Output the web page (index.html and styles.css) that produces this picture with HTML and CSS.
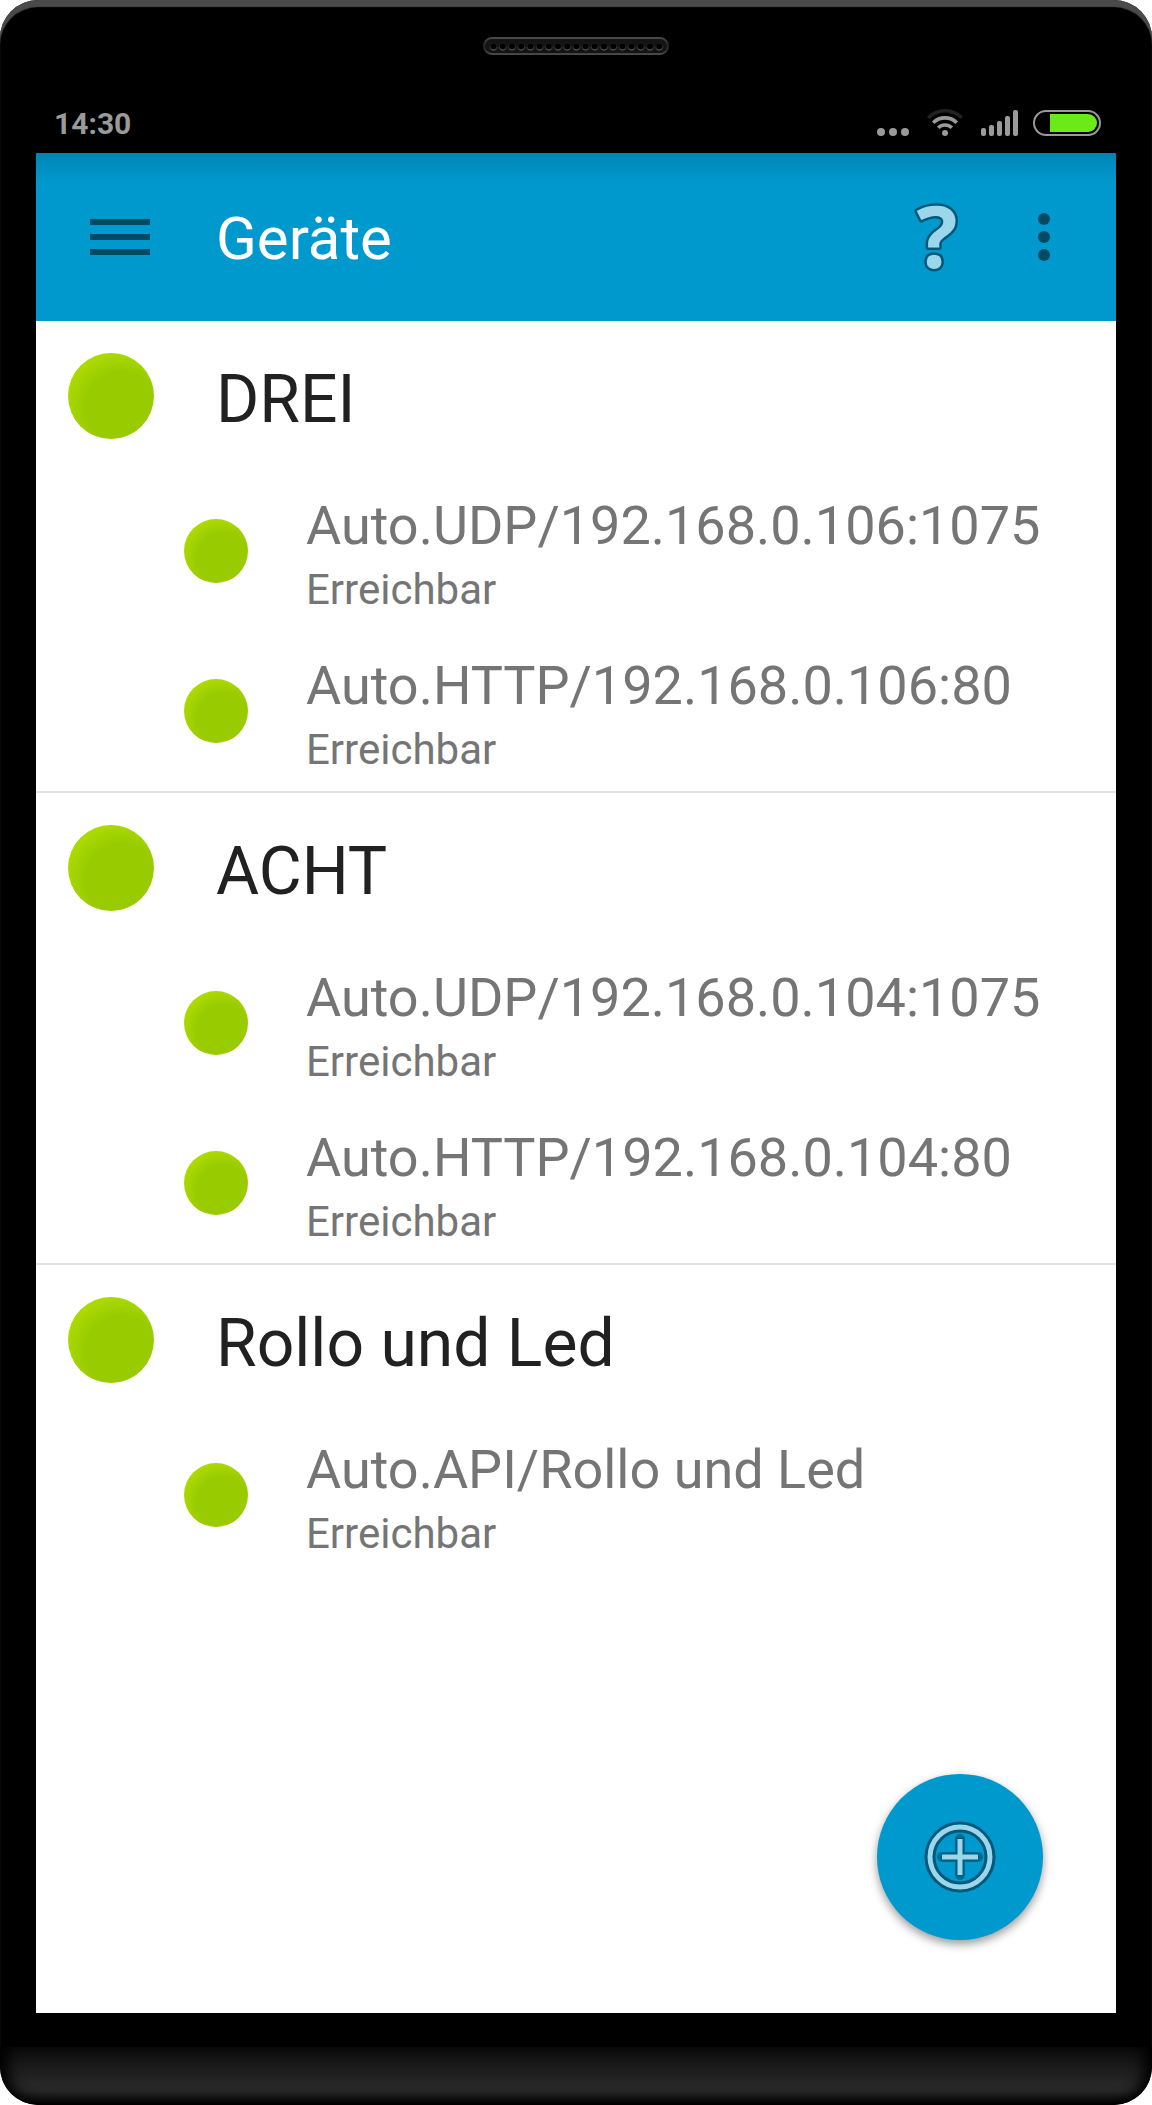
FILE: index.html
```html
<!DOCTYPE html>
<html lang="de">
<head>
<meta charset="utf-8">
<meta name="viewport" content="width=device-width, initial-scale=1">
<title>Geräte</title>
<link rel="stylesheet" href="styles.css">
</head>
<body>
<div class="device">
  <div class="top-bezel">
    <svg class="speaker" width="186" height="18" viewBox="0 0 186 18" aria-hidden="true">
      <defs>
        <linearGradient id="rim" x1="0" y1="0" x2="0" y2="1">
          <stop offset="0" stop-color="#4a4a4a"/>
          <stop offset="0.5" stop-color="#202020"/>
          <stop offset="1" stop-color="#484848"/>
        </linearGradient>
        <linearGradient id="hole" x1="0" y1="0" x2="0" y2="1">
          <stop offset="0.4" stop-color="#1c1c1c"/>
          <stop offset="1" stop-color="#6a6a6a"/>
        </linearGradient>
        <pattern id="holes" x="6" y="0" width="9.2" height="18" patternUnits="userSpaceOnUse">
          <circle cx="4.6" cy="9.5" r="3.5" fill="#000" stroke="url(#hole)" stroke-width="1"/>
        </pattern>
      </defs>
      <rect x="1" y="1" width="184" height="16" rx="8" fill="#141414" stroke="url(#rim)" stroke-width="2"/>
      <rect x="6" y="3" width="174.8" height="12" fill="url(#holes)"/>
    </svg>
  </div>

  <div class="status-bar">
    <time class="clock" datetime="14:30">14:30</time>
    <svg class="status-icons" width="226" height="30" viewBox="0 0 226 30" aria-hidden="true">
      <g fill="#9a9a9a">
        <circle cx="6" cy="24" r="4"/>
        <circle cx="18" cy="24" r="4"/>
        <circle cx="30" cy="24" r="4"/>
        <circle cx="70" cy="25" r="3"/>
        <rect x="106" y="20" width="5" height="8" rx="2"/>
        <rect x="114" y="17" width="5" height="11" rx="2"/>
        <rect x="122" y="13" width="5" height="15" rx="2"/>
        <rect x="130" y="8" width="5" height="20" rx="2"/>
        <rect x="138" y="2" width="5" height="26" rx="2"/>
      </g>
      <g fill="none" stroke-width="3.6">
        <path d="M53.2 9.8a23.5 23.5 0 0 1 33.6 0" stroke="#222"/>
        <path d="M58.2 14.8a16.6 16.6 0 0 1 23.6 0" stroke="#9a9a9a"/>
        <path d="M63.2 19.8a9.6 9.6 0 0 1 13.6 0" stroke="#9a9a9a"/>
      </g>
      <rect x="159" y="3" width="66" height="24" rx="12" fill="none" stroke="#9a9a9a" stroke-width="2"/>
      <path d="M175 6h38a9 9 0 0 1 0 18h-38z" fill="#6cea17"/>
    </svg>
  </div>

  <main class="screen">
    <header class="app-bar">
      <button class="icon-button menu-button" type="button" aria-label="Menü">
        <svg width="60" height="36" viewBox="0 0 60 36" fill="#004a63" aria-hidden="true">
          <rect width="60" height="6"/>
          <rect y="15" width="60" height="6"/>
          <rect y="30" width="60" height="6"/>
        </svg>
      </button>
      <h1 class="title">Geräte</h1>
      <button class="icon-button help-button" type="button" aria-label="Hilfe">
        <svg width="72" height="132" viewBox="0 0 72 132" aria-hidden="true">
          <text class="help-mark" x="37" y="97" text-anchor="middle">?</text>
        </svg>
      </button>
      <button class="icon-button" type="button" aria-label="Weitere Optionen">
        <svg width="72" height="72" viewBox="0 0 72 72" fill="#004a63" aria-hidden="true">
          <circle cx="36" cy="18" r="6"/>
          <circle cx="36" cy="36" r="6"/>
          <circle cx="36" cy="54" r="6"/>
        </svg>
      </button>
    </header>

    <section class="group">
      <div class="group-head">
        <span class="dot dot-large"></span>
        <h2 class="group-name">DREI</h2>
      </div>
      <ul class="connections">
        <li class="connection">
          <span class="dot"></span>
          <div class="details">
            <p class="address">Auto.UDP/192.168.0.106:1075</p>
            <p class="state">Erreichbar</p>
          </div>
        </li>
        <li class="connection">
          <span class="dot"></span>
          <div class="details">
            <p class="address">Auto.HTTP/192.168.0.106:80</p>
            <p class="state">Erreichbar</p>
          </div>
        </li>
      </ul>
    </section>

    <section class="group">
      <div class="group-head">
        <span class="dot dot-large"></span>
        <h2 class="group-name">ACHT</h2>
      </div>
      <ul class="connections">
        <li class="connection">
          <span class="dot"></span>
          <div class="details">
            <p class="address">Auto.UDP/192.168.0.104:1075</p>
            <p class="state">Erreichbar</p>
          </div>
        </li>
        <li class="connection">
          <span class="dot"></span>
          <div class="details">
            <p class="address">Auto.HTTP/192.168.0.104:80</p>
            <p class="state">Erreichbar</p>
          </div>
        </li>
      </ul>
    </section>

    <section class="group">
      <div class="group-head">
        <span class="dot dot-large"></span>
        <h2 class="group-name">Rollo und Led</h2>
      </div>
      <ul class="connections">
        <li class="connection">
          <span class="dot"></span>
          <div class="details">
            <p class="address">Auto.API/Rollo und Led</p>
            <p class="state">Erreichbar</p>
          </div>
        </li>
      </ul>
    </section>

    <button class="fab" type="button" aria-label="Gerät hinzufügen">
      <svg width="72" height="72" viewBox="0 0 72 72" fill="none" aria-hidden="true">
        <g stroke="#00587a" stroke-linejoin="round">
          <circle cx="36" cy="36" r="30" stroke-width="11"/>
          <path d="M36 18v36M18 36h36" stroke-width="10" stroke-linecap="round" stroke="#006a90"/>
          <path d="M36 17v38M17 36h38" stroke-width="7"/>
        </g>
        <g stroke="#9bd6eb" stroke-width="5">
          <circle cx="36" cy="36" r="30"/>
          <path d="M36 18v36M18 36h36"/>
        </g>
      </svg>
    </button>
  </main>

  <div class="chin"></div>
</div>
</body>
</html>
```
FILE: styles.css
```css
* {
  box-sizing: border-box;
}

body {
  margin: 0;
  background: #fff;
  font-family: Roboto, "Noto Sans", sans-serif;
}

h1, h2, p, ul {
  margin: 0;
  padding: 0;
  font-weight: 400;
  list-style: none;
}

/* Phone body */
.device {
  display: flex;
  flex-direction: column;
  min-height: 100vh;
  overflow: hidden;
  border-radius: 38px;
  background: #000;
  box-shadow: inset 0 7px 1px #4a4a4a;
}

.top-bezel {
  display: flex;
  justify-content: center;
  padding-top: 37px;
  height: 101px;
}

.status-bar {
  display: flex;
  justify-content: space-between;
  align-items: flex-start;
  height: 52px;
  padding: 7px 51px 0 54px;
}

.clock {
  color: #9a9a9a;
  font-size: 30px;
  font-weight: 700;
  line-height: 32px;
}

.screen {
  position: relative;
  flex: 1;
  margin: 0 36px;
  background: #fff;
}

/* App bar */
.app-bar {
  display: flex;
  align-items: center;
  height: 168px;
  padding-right: 36px;
  background: linear-gradient(#0082b0, #008ec0 12px, #0099cd 32px);
}

.title {
  flex: 1;
  padding-top: 4px;
  color: #fff;
  font-size: 60px;
  line-height: 72px;
}

.icon-button {
  display: flex;
  justify-content: center;
  align-items: center;
  width: 72px;
  height: 72px;
  margin-right: 36px;
  padding: 0;
  border: 0;
  background: none;
}

.icon-button:last-child {
  margin-right: 0;
}

.menu-button {
  width: 180px;
  margin-right: 0;
  justify-content: flex-start;
  padding-left: 54px;
}

.help-button {
  height: 132px;
}

.help-mark {
  fill: #9bd6eb;
  stroke: #005878;
  stroke-width: 5px;
  stroke-linejoin: round;
  paint-order: stroke;
  font-family: "Open Sans", "Noto Sans", sans-serif;
  font-size: 86px;
  font-weight: 700;
}

/* Device list */
.group + .group {
  border-top: 2px solid #e2e2e2;
}

.group-head {
  display: flex;
  align-items: center;
  gap: 62px;
  height: 150px;
  padding-left: 32px;
}

.group-name {
  padding-top: 8px;
  color: #212121;
  font-size: 66px;
  line-height: 80px;
}

.connection {
  display: flex;
  align-items: center;
  gap: 58px;
  height: 160px;
  padding-left: 148px;
}

.details {
  padding-top: 14px;
  color: #757575;
}

.address {
  font-size: 54px;
  line-height: 64px;
}

.state {
  font-size: 42px;
  line-height: 64px;
}

.dot {
  flex: none;
  width: 64px;
  height: 64px;
  border-radius: 50%;
  background: radial-gradient(circle at 62% 64%, #99cc00 48%, #abd900 72%);
}

.dot-large {
  width: 86px;
  height: 86px;
}

/* Add button */
.fab {
  position: absolute;
  right: 73px;
  bottom: 73px;
  display: flex;
  justify-content: center;
  align-items: center;
  width: 166px;
  height: 166px;
  padding: 0;
  border: 0;
  border-radius: 50%;
  background: #0099cd;
  box-shadow: 0 4px 10px rgba(0, 0, 0, 0.4);
}

.chin {
  height: 58px;
  margin-top: 34px;
  border-radius: 0 0 38px 38px;
  background: linear-gradient(#0c0c0c, #262626 62%, #262626 76%, #000);
  box-shadow: inset 14px 0 14px -6px #000, inset -14px 0 14px -6px #000;
}
```
